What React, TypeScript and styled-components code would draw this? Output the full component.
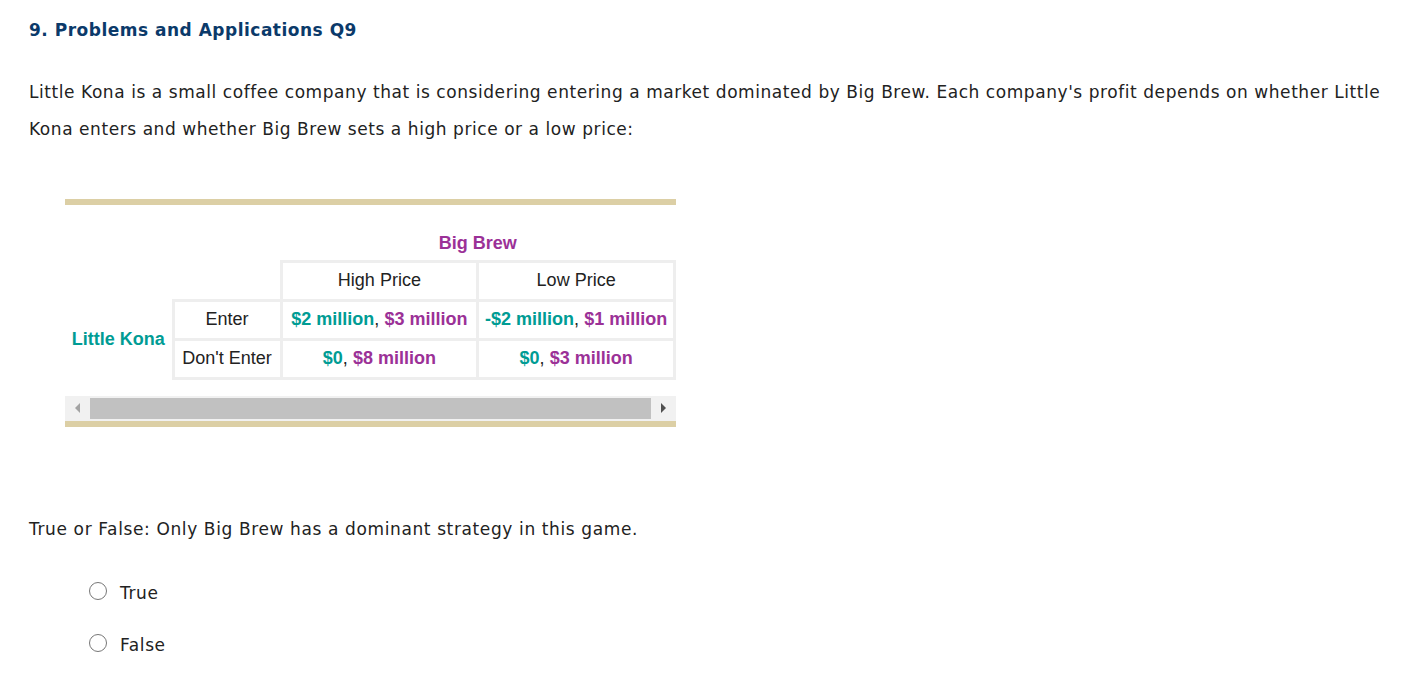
import React from "react";
import styled, { createGlobalStyle } from "styled-components";

const Global = createGlobalStyle`
  html, body { margin: 0; padding: 0; background: #fff; }
  body { font-family: "DejaVu Sans", Verdana, sans-serif; color: #222; }
`;

const Page = styled.div`
  padding: 19px 14px 0 29px;
`;

const Title = styled.h2`
  margin: 0;
  font-size: 17px;
  font-weight: bold;
  color: #0b3a6a;
  line-height: 22px;
  letter-spacing: 0.5px;
`;

const Para = styled.p`
  margin: 33px 0 0 0;
  font-size: 17px;
  line-height: 37px;
  letter-spacing: 0.56px;
`;

const TableFrame = styled.div`
  margin: 51px 0 0 36px;
  width: 611px;
  border-top: 6px solid #dccfa5;
  border-bottom: 6px solid #dccfa5;
  padding-top: 15px;
`;

const Payoff = styled.table`
  border-collapse: collapse;
  table-layout: fixed;
  width: 611px;
  font-family: "Liberation Sans", Arial, sans-serif;
  font-size: 18px;
  color: #222;
`;

const Row = styled.tr<{ $h?: number }>`
  height: ${(p) => p.$h ?? 39}px;
`;

const Cell = styled.td<{ $bordered?: boolean; $w?: number }>`
  padding: 0;
  text-align: center;
  border: ${(p) => (p.$bordered ? "3px solid #eeeeee" : "none")};
  ${(p) => (p.$w ? `width: ${p.$w}px;` : "")}
`;

const HeadCell = styled.td`
  padding: 8px 0 0 0;
  text-align: center;
`;

const Teal = styled.span`
  color: #009c94;
  font-weight: bold;
`;

const Purple = styled.span`
  color: #9b3197;
  font-weight: bold;
`;

const Scrollbar = styled.div`
  margin-top: 16px;
  height: 25px;
  background: #f1f1f1;
  display: flex;
  align-items: center;
`;

const Arrow = styled.div<{ $dir: "left" | "right"; $active?: boolean }>`
  width: 25px;
  display: flex;
  justify-content: center;
  align-items: center;
  &::before {
    content: "";
    width: 0;
    height: 0;
    border-top: 5px solid transparent;
    border-bottom: 5px solid transparent;
    ${(p) =>
      p.$dir === "left"
        ? `border-right: 5px solid ${p.$active ? "#505050" : "#a3a3a3"};`
        : `border-left: 5px solid ${p.$active ? "#505050" : "#a3a3a3"};`}
  }
`;

const Thumb = styled.div`
  flex: 1;
  height: 21px;
  background: #c1c1c1;
`;

const Question = styled.p`
  margin: 91px 0 0 0;
  font-size: 17px;
  line-height: 22px;
  letter-spacing: 0.62px;
`;

const Options = styled.div`
  margin: 42px 0 0 60px;
  display: flex;
  flex-direction: column;
  gap: 30px;
`;

const Option = styled.label`
  display: flex;
  align-items: center;
  gap: 13px;
  font-size: 17px;
  line-height: 22px;
  letter-spacing: 0.6px;
`;

const Radio = styled.span`
  width: 18px;
  height: 18px;
  border: 1.5px solid #777;
  border-radius: 50%;
  box-sizing: border-box;
  display: inline-block;
  margin-top: -4px;
`;

export default function App() {
  return (
    <>
      <Global />
      <Page>
        <Title>9. Problems and Applications Q9</Title>
        <Para>
          Little Kona is a small coffee company that is considering entering a market dominated by Big
          Brew. Each company's profit depends on whether Little Kona enters and whether Big Brew sets a
          high price or a low price:
        </Para>
        <TableFrame>
          <Payoff>
            <tbody>
              <Row $h={41}>
                <Cell $w={108} />
                <Cell $w={108} />
                <HeadCell colSpan={2}>
                  <Purple>Big Brew</Purple>
                </HeadCell>
              </Row>
              <Row>
                <Cell />
                <Cell />
                <Cell $bordered $w={196}>High Price</Cell>
                <Cell $bordered>Low Price</Cell>
              </Row>
              <Row>
                <Cell rowSpan={2}>
                  <Teal>Little Kona</Teal>
                </Cell>
                <Cell $bordered>Enter</Cell>
                <Cell $bordered>
                  <Teal>$2 million</Teal>, <Purple>$3 million</Purple>
                </Cell>
                <Cell $bordered>
                  <Teal>-$2 million</Teal>, <Purple>$1 million</Purple>
                </Cell>
              </Row>
              <Row>
                <Cell $bordered>Don't Enter</Cell>
                <Cell $bordered>
                  <Teal>$0</Teal>, <Purple>$8 million</Purple>
                </Cell>
                <Cell $bordered>
                  <Teal>$0</Teal>, <Purple>$3 million</Purple>
                </Cell>
              </Row>
            </tbody>
          </Payoff>
          <Scrollbar>
            <Arrow $dir="left" />
            <Thumb />
            <Arrow $dir="right" $active />
          </Scrollbar>
        </TableFrame>
        <Question>True or False: Only Big Brew has a dominant strategy in this game.</Question>
        <Options>
          <Option>
            <Radio />
            True
          </Option>
          <Option>
            <Radio />
            False
          </Option>
        </Options>
      </Page>
    </>
  );
}
